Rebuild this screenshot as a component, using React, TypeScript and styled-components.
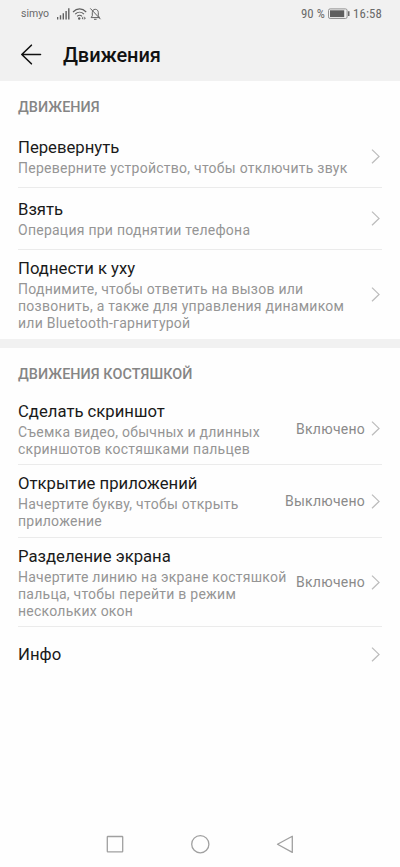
import React from "react";
import styled, { createGlobalStyle } from "styled-components";

const GlobalStyle = createGlobalStyle`
  * { box-sizing: border-box; }
  body { margin: 0; background: #fefefe; font-family: Roboto, "Noto Sans", sans-serif; }
`;

const Screen = styled.div`
  width: 400px;
  height: 867px;
  display: flex;
  flex-direction: column;
  background: #fefefe;
  overflow: hidden;
`;

const Header = styled.header`
  height: 81px;
  flex: none;
  background: #f1f1f1;
`;

const StatusBar = styled.div`
  height: 28px;
  padding: 0 18px 0 21px;
  display: flex;
  align-items: center;
  justify-content: space-between;
  color: #6a6a6a;
`;

const StatusGroup = styled.div`
  display: flex;
  align-items: center;
`;

const Carrier = styled.span`
  font-size: 10.5px;
  line-height: 14px;
  width: 36px;
`;

const Percent = styled.span`
  font-size: 12.8px;
  line-height: 14px;
  font-stretch: condensed;
  letter-spacing: 0.1px;
  margin-right: 3px;
`;

const Clock = styled(Percent)`
  margin: 0 0 0 3px;
  letter-spacing: 0.15px;
`;

const TitleBar = styled.div`
  height: 53px;
  padding-left: 20px;
  display: flex;
  align-items: center;
  gap: 21px;
`;

const PageTitle = styled.h1`
  margin: 0;
  font-size: 20px;
  line-height: 24px;
  font-weight: 500;
  letter-spacing: -0.1px;
  color: #111;
`;

const Section = styled.section`
  display: flex;
  flex-direction: column;
  padding: 0 18px;
`;

const SectionTitle = styled.h2`
  margin: 0;
  height: 45px;
  padding-top: 17px;
  font-size: 14.4px;
  line-height: 19px;
  font-weight: 500;
  letter-spacing: 0.06px;
  color: #858585;
`;

const SectionGap = styled.div`
  height: 9px;
  flex: none;
  background: #f1f1f1;
`;

const Row = styled.div<{ $height: number; $divided: boolean }>`
  height: ${(p) => p.$height}px;
  display: flex;
  align-items: center;
  box-shadow: ${(p) => (p.$divided ? "inset 0 -1px 0 #ebebeb" : "none")};
`;

const RowText = styled.div`
  flex: 1;
  min-width: 0;
`;

const RowTitle = styled.div`
  font-size: 16.7px;
  line-height: 22px;
  color: #1a1a1a;
`;

const RowDetail = styled.div`
  margin-top: 1px;
  font-size: 14px;
  line-height: 17px;
  letter-spacing: 0.25px;
  color: #959595;
  white-space: pre;
`;

const RowValue = styled.span`
  font-size: 14px;
  line-height: 17px;
  letter-spacing: 0.25px;
  color: #8a8a8a;
  margin-right: 5px;
`;

const NavBar = styled.nav`
  margin-top: auto;
  height: 46px;
  flex: none;
  display: flex;
  align-items: center;
  justify-content: center;
  gap: 65px;
`;

const Chevron = () => (
  <svg width="12" height="18" viewBox="0 0 12 18" fill="none" stroke="#bdbdbd" strokeWidth="1.3">
    <path d="M2 1.600 9 8.400 2 15.200" />
  </svg>
);

const SignalIcon = () => (
  <svg width="15" height="14" viewBox="0 0 15 14" fill="#606060">
    <path d="M0 10.1h1.3v2.4H0zM2.8 8.3h1.4v4.2H2.8zM5.6 6.2H7v6.3H5.6zM8.4 3.9h1.4v8.6H8.4zM11.1 1.2h1.4v11.3h-1.4z" />
  </svg>
);

const WifiIcon = () => (
  <svg width="17" height="14" viewBox="0 0 17 14" fill="none" stroke="#606060" strokeWidth="1.1">
    <path d="M1 5C5 .8 10.2.8 14.2 5M3.2 7.2c2.6-2.600 6.200-2.600 8.800 0M5.200 9.300c1.400-1.400 3.400-1.400 4.800 0" />
    <circle cx="7.2" cy="11.5" r="1.2" fill="#606060" stroke="none" />
    <path d="m11.2 9.600-1.500 1.600 1.500 1.600zM12.300 9.600l1.500 1.600-1.500 1.600z" fill="#606060" stroke="none" />
  </svg>
);

const MutedBellIcon = () => (
  <svg width="13" height="14" viewBox="0 0 13 14" fill="none" stroke="#606060">
    <path d="M2.1 10.6h8.4L9.3 8.8V5.6C9.3 3.6 8.1 2.3 6.3 2.3S3.3 3.6 3.3 5.6v3.2zM5 12.3h2.600M1.300 1.400l10.200 10.800" />
  </svg>
);

const BatteryIcon = () => (
  <svg width="22" height="12" viewBox="0 0 22 12" fill="none">
    <rect x="0.5" y="0.9" width="18.6" height="9.6" rx="1.6" stroke="#929292" />
    <rect x="2" y="2.3" width="14.2" height="6.8" fill="#5f5f5f" />
    <path d="M20 3.3h1.5v4.8H20z" fill="#6a6a6a" />
  </svg>
);

const BackIcon = () => (
  <svg width="22" height="22" viewBox="0 0 22 22" fill="none" stroke="#111" strokeWidth="1.6" strokeLinecap="round" strokeLinejoin="round">
    <path d="M20.5 10.5H1.8M11.4 1.2 1.8 10.5l9.6 9.3" />
  </svg>
);

const RecentsIcon = () => (
  <svg width="20" height="20" viewBox="0 0 20 20" fill="none" stroke="#a0a0a0" strokeWidth="1.3">
    <rect x="2.3" y="2.5" width="15.4" height="15.4" rx="0.6" />
  </svg>
);

const HomeIcon = () => (
  <svg width="20" height="20" viewBox="0 0 20 20" fill="none" stroke="#a0a0a0" strokeWidth="1.3">
    <circle cx="10.3" cy="10.2" r="8.6" />
  </svg>
);

const NavBackIcon = () => (
  <svg width="20" height="20" viewBox="0 0 20 20" fill="none" stroke="#a0a0a0" strokeWidth="1.3" strokeLinejoin="round">
    <path d="M17.3 2.2v16.2L2.5 10.3z" />
  </svg>
);

type Item = { title: string; detail?: string; value?: string; height: number };

const motions: Item[] = [
  { title: "Перевернуть", detail: "Переверните устройство, чтобы отключить звук", height: 62 },
  { title: "Взять", detail: "Операция при поднятии телефона", height: 62 },
  {
    title: "Поднести к уху",
    detail: "Поднимите, чтобы ответить на вызов или\nпозвонить, а также для управления динамиком\nили Bluetooth-гарнитурой",
    height: 89,
  },
];

const knuckles: Item[] = [
  {
    title: "Сделать скриншот",
    detail: "Съемка видео, обычных и длинных\nскриншотов костяшками пальцев",
    value: "Включено",
    height: 72,
  },
  {
    title: "Открытие приложений",
    detail: "Начертите букву, чтобы открыть\nприложение",
    value: "Выключено",
    height: 73,
  },
  {
    title: "Разделение экрана",
    detail: "Начертите линию на экране костяшкой\nпальца, чтобы перейти в режим\nнескольких окон",
    value: "Включено",
    height: 89,
  },
  { title: "Инфо", height: 55 },
];

const ItemList = ({ items }: { items: Item[] }) => (
  <>
    {items.map((item, i) => (
      <Row key={item.title} $height={item.height} $divided={i < items.length - 1}>
        <RowText>
          <RowTitle>{item.title}</RowTitle>
          {item.detail && <RowDetail>{item.detail}</RowDetail>}
        </RowText>
        {item.value && <RowValue>{item.value}</RowValue>}
        <Chevron />
      </Row>
    ))}
  </>
);

export default function App() {
  return (
    <Screen>
      <GlobalStyle />
      <Header>
        <StatusBar>
          <StatusGroup>
            <Carrier>simyo</Carrier>
            <SignalIcon />
            <WifiIcon />
            <MutedBellIcon />
          </StatusGroup>
          <StatusGroup>
            <Percent>90 %</Percent>
            <BatteryIcon />
            <Clock>16:58</Clock>
          </StatusGroup>
        </StatusBar>
        <TitleBar>
          <BackIcon />
          <PageTitle>Движения</PageTitle>
        </TitleBar>
      </Header>
      <Section>
        <SectionTitle>ДВИЖЕНИЯ</SectionTitle>
        <ItemList items={motions} />
      </Section>
      <SectionGap />
      <Section>
        <SectionTitle>ДВИЖЕНИЯ КОСТЯШКОЙ</SectionTitle>
        <ItemList items={knuckles} />
      </Section>
      <NavBar>
        <RecentsIcon />
        <HomeIcon />
        <NavBackIcon />
      </NavBar>
    </Screen>
  );
}
